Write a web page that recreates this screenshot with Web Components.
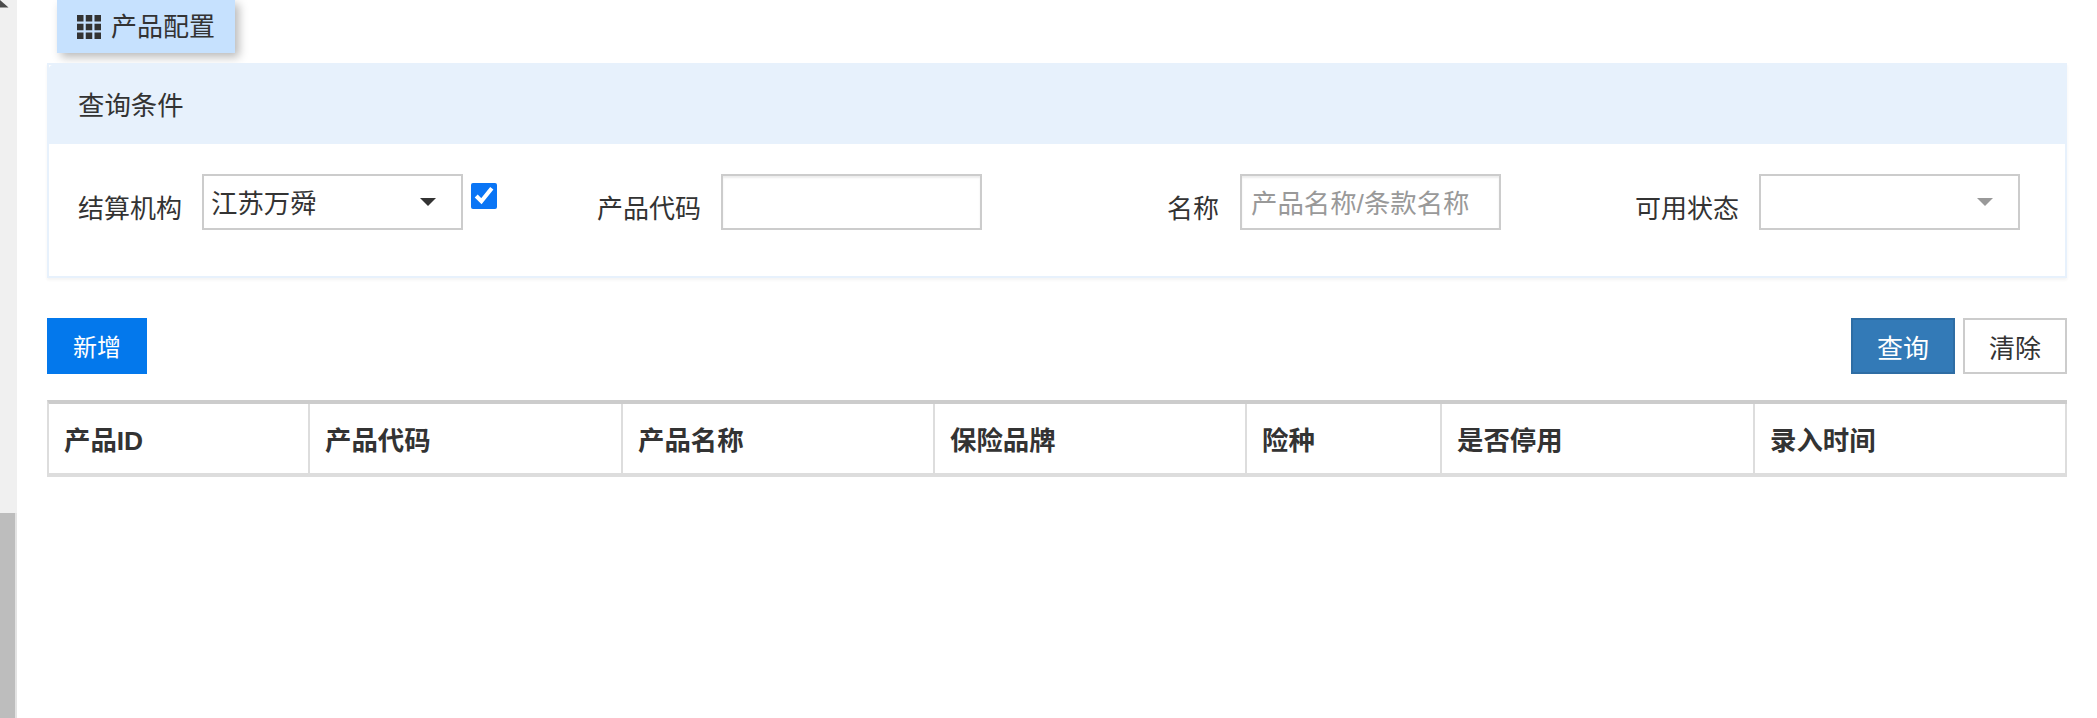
<!DOCTYPE html>
<html lang="zh">
<head>
<meta charset="utf-8">
<title>产品配置</title>
<style>
	html, body{
		margin: 0;
		height: 100%;
		background-color: #FFF;
		overflow: hidden;
	}
	body{
		font-family: "Liberation Sans", "Noto Sans CJK SC", sans-serif;
		font-size: 26px;
		color: #333;
	}
</style>
</head>
<body>
<product-page></product-page>

<script>
const FONT = '"Liberation Sans", "Noto Sans CJK SC", sans-serif';

class ScrollRail extends HTMLElement {
	constructor() {
		super();
		this.attachShadow({ mode: 'open' });
		this.shadowRoot.innerHTML = `
		<style>
		:host{
			display: flex;
			flex-direction: column;
			flex: none;
			width: 17px;
			height: 718px;
			background-color: #F0F0F0;
		}
		svg{
			display: block;
		}
		.thumb{
			margin-top: auto;
			height: 205px;
			background-color: #BDBDBD;
			border-right: 2px solid #E3E3E3;
		}
		</style>
		<svg width="9" height="8" viewBox="0 0 9 8"><polygon points="0,0 8.5,7.5 0,7.5" fill="#4A4A4A"/></svg>
		<div class="thumb"></div>
		`;
	}
}
customElements.define('scroll-rail', ScrollRail);

class PageTab extends HTMLElement {
	constructor() {
		super();
		this.attachShadow({ mode: 'open' });
		this.shadowRoot.innerHTML = `
		<style>
		:host{
			display: flex;
			align-items: center;
			box-sizing: border-box;
			width: 178px;
			height: 53px;
			margin-left: 10px;
			padding-left: 20px;
			gap: 10px;
			background-color: #C6E1FE;
			box-shadow: 4px 4px 9px rgba(0,0,0,.28);
			font-size: 26px;
			line-height: 1;
			color: #333;
			white-space: nowrap;
		}
		svg{
			flex: none;
		}
		</style>
		<svg width="24" height="24" viewBox="0 0 24 24" fill="#333">
			<rect x="0" y="0" width="6.5" height="6.5"/><rect x="8.75" y="0" width="6.5" height="6.5"/><rect x="17.5" y="0" width="6.5" height="6.5"/>
			<rect x="0" y="8.75" width="6.5" height="6.5"/><rect x="8.75" y="8.75" width="6.5" height="6.5"/><rect x="17.5" y="8.75" width="6.5" height="6.5"/>
			<rect x="0" y="17.5" width="6.5" height="6.5"/><rect x="8.75" y="17.5" width="6.5" height="6.5"/><rect x="17.5" y="17.5" width="6.5" height="6.5"/>
		</svg>
		<span><slot></slot></span>
		`;
	}
}
customElements.define('page-tab', PageTab);

class QueryPanel extends HTMLElement {
	constructor() {
		super();
		this.attachShadow({ mode: 'open' });
		this.shadowRoot.innerHTML = `
		<style>
		:host{
			display: block;
			box-sizing: border-box;
			height: 215px;
			margin-top: 10px;
			background-color: #FFF;
			border: 2px solid #E7F1FC;
			box-shadow: 0 2px 3px rgba(0,0,0,.05);
		}
		.head{
			box-sizing: border-box;
			height: 79px;
			padding-left: 29px;
			background-color: #E7F1FC;
			border-top-left-radius: 4px;
			font-size: 26.4px;
			line-height: 82px;
		}
		.fields{
			display: grid;
			grid-template-columns: repeat(4, 519px);
			padding: 30px 0 0 29px;
		}
		</style>
		<div class="head"><slot name="title"></slot></div>
		<div class="fields"><slot></slot></div>
		`;
	}
}
customElements.define('query-panel', QueryPanel);

class QueryField extends HTMLElement {
	static get observedAttributes() {
		return ['label'];
	}

	constructor() {
		super();
		this.attachShadow({ mode: 'open' });
		this.shadowRoot.innerHTML = `
		<style>
		:host{
			display: flex;
			align-items: flex-start;
			height: 56px;
			white-space: nowrap;
		}
		.label{
			flex: none;
			box-sizing: border-box;
			width: 124px;
			padding: 7px 21px 0 0;
			text-align: right;
			font-size: 26px;
			line-height: 56px;
		}
		</style>
		<span class="label"></span>
		<slot></slot>
		`;
	}

	attributeChangedCallback(name, oldValue, newValue) {
		this.shadowRoot.querySelector('.label').textContent = newValue;
	}
}
customElements.define('query-field', QueryField);

class SelectBox extends HTMLElement {
	constructor() {
		super();
		this.attachShadow({ mode: 'open' });
		this.shadowRoot.innerHTML = `
		<style>
		:host{
			display: flex;
			align-items: center;
			justify-content: space-between;
			flex: none;
			box-sizing: border-box;
			width: 261px;
			height: 56px;
			padding: 0 25px 0 7px;
			background-color: #FFF;
			border: 2px solid #CCC;
			font-size: 26.4px;
			color: #333;
		}
		.arrow{
			flex: none;
			width: 0;
			height: 0;
			border-left: 8px solid transparent;
			border-right: 8px solid transparent;
			border-top: 8px solid var(--arrow, #333);
		}
		.value{
			padding-top: 3px;
			line-height: 50px;
		}
		</style>
		<span class="value"><slot></slot></span>
		<span class="arrow"></span>
		`;
	}
}
customElements.define('select-box', SelectBox);

class TextBox extends HTMLElement {
	constructor() {
		super();
		this.attachShadow({ mode: 'open' });
		this.shadowRoot.innerHTML = `
		<style>
		:host{
			display: block;
			flex: none;
			width: 261px;
			height: 56px;
		}
		input{
			display: block;
			box-sizing: border-box;
			width: 100%;
			height: 100%;
			margin: 0;
			padding: 4px 9px 0;
			border: 2px solid #CCC;
			border-radius: 0;
			outline: none;
			background-color: #FFF;
			box-shadow: inset 0 2px 2px rgba(0,0,0,.075);
			font-family: ${FONT};
			font-size: 26.4px;
			color: #333;
		}
		input::placeholder{
			color: #999;
			opacity: 1;
		}
		</style>
		<input type="text">
		`;
		this.shadowRoot.querySelector('input').placeholder = this.getAttribute('placeholder') || '';
	}
}
customElements.define('text-box', TextBox);

class TickBox extends HTMLElement {
	constructor() {
		super();
		this.attachShadow({ mode: 'open' });
		this.shadowRoot.innerHTML = `
		<style>
		:host{
			display: block;
			flex: none;
			width: 26px;
			height: 26px;
			margin: 9px 0 0 8px;
		}
		input{
			display: block;
			width: 26px;
			height: 26px;
			margin: 0;
			accent-color: #0A75F5;
		}
		</style>
		<input type="checkbox" checked>
		`;
	}
}
customElements.define('tick-box', TickBox);

class ActionButton extends HTMLElement {
	constructor() {
		super();
		this.attachShadow({ mode: 'open' });
		this.shadowRoot.innerHTML = `
		<style>
		:host{
			display: flex;
			align-items: center;
			justify-content: center;
			box-sizing: border-box;
			width: 104px;
			height: 56px;
			border: 2px solid #CCC;
			background-color: #FFF;
			font-size: 26px;
			color: #333;
			white-space: nowrap;
		}
		:host([kind="add"]){
			width: 100px;
			padding-bottom: 2px;
			border-color: #0378EC;
			background-color: #0378EC;
			font-size: 24px;
			color: #FFF;
		}
		:host([kind="primary"]){
			border-color: #2E6DA4;
			background-color: #337AB7;
			color: #FFF;
		}
		</style>
		<slot></slot>
		`;
	}
}
customElements.define('action-button', ActionButton);

class ActionBar extends HTMLElement {
	constructor() {
		super();
		this.attachShadow({ mode: 'open' });
		this.shadowRoot.innerHTML = `
		<style>
		:host{
			display: flex;
			align-items: center;
			margin-top: 40px;
		}
		.right{
			display: flex;
			gap: 8px;
			margin-left: auto;
		}
		</style>
		<slot name="left"></slot>
		<div class="right"><slot name="right"></slot></div>
		`;
	}
}
customElements.define('action-bar', ActionBar);

class DataTable extends HTMLElement {
	static get columns() {
		return [
			['产品ID', 261],
			['产品代码', 313],
			['产品名称', 312],
			['保险品牌', 312],
			['险种', 195],
			['是否停用', 313],
			['录入时间', 312]
		];
	}

	constructor() {
		super();
		this.attachShadow({ mode: 'open' });
		this.shadowRoot.innerHTML = `
		<style>
		:host{
			display: block;
			margin-top: 26px;
		}
		table{
			box-sizing: border-box;
			width: 2020px;
			table-layout: fixed;
			border-collapse: separate;
			border-spacing: 0;
			border-top: 4px solid #CCC;
			border-bottom: 4px solid #DDD;
			border-left: 2px solid #DDD;
		}
		th{
			box-sizing: border-box;
			height: 69px;
			padding: 0 0 0 15px;
			border-right: 2px solid #DDD;
			text-align: left;
			font-size: 26.4px;
			font-weight: bold;
			color: #333;
		}
		</style>
		<table>
			<colgroup></colgroup>
			<thead><tr></tr></thead>
		</table>
		`;
		this.createColumns();
	}

	createColumns() {
		const colgroup = this.shadowRoot.querySelector('colgroup');
		const row = this.shadowRoot.querySelector('tr');
		for (const [title, width] of this.constructor.columns) {
			const col = document.createElement('col');
			col.style.width = width + 'px';
			colgroup.append(col);
			const th = document.createElement('th');
			th.textContent = title;
			row.append(th);
		}
	}
}
customElements.define('data-table', DataTable);

class ProductPage extends HTMLElement {
	constructor() {
		super();
		this.attachShadow({ mode: 'open' });
		this.shadowRoot.innerHTML = `
		<style>
		:host{
			display: flex;
			height: 718px;
		}
		main{
			flex: 1;
			min-width: 0;
			padding: 0 30px;
		}
		.unset{
			--arrow: #999;
		}
		</style>
		<scroll-rail></scroll-rail>
		<main>
			<page-tab>产品配置</page-tab>
			<query-panel>
				<span slot="title">查询条件</span>
				<query-field label="结算机构">
					<select-box>江苏万舜</select-box>
					<tick-box></tick-box>
				</query-field>
				<query-field label="产品代码"><text-box></text-box></query-field>
				<query-field label="名称"><text-box placeholder="产品名称/条款名称"></text-box></query-field>
				<query-field label="可用状态"><select-box class="unset"></select-box></query-field>
			</query-panel>
			<action-bar>
				<action-button slot="left" kind="add">新增</action-button>
				<action-button slot="right" kind="primary">查询</action-button>
				<action-button slot="right">清除</action-button>
			</action-bar>
			<data-table></data-table>
		</main>
		`;
	}
}
customElements.define('product-page', ProductPage);
</script>
</body>
</html>
